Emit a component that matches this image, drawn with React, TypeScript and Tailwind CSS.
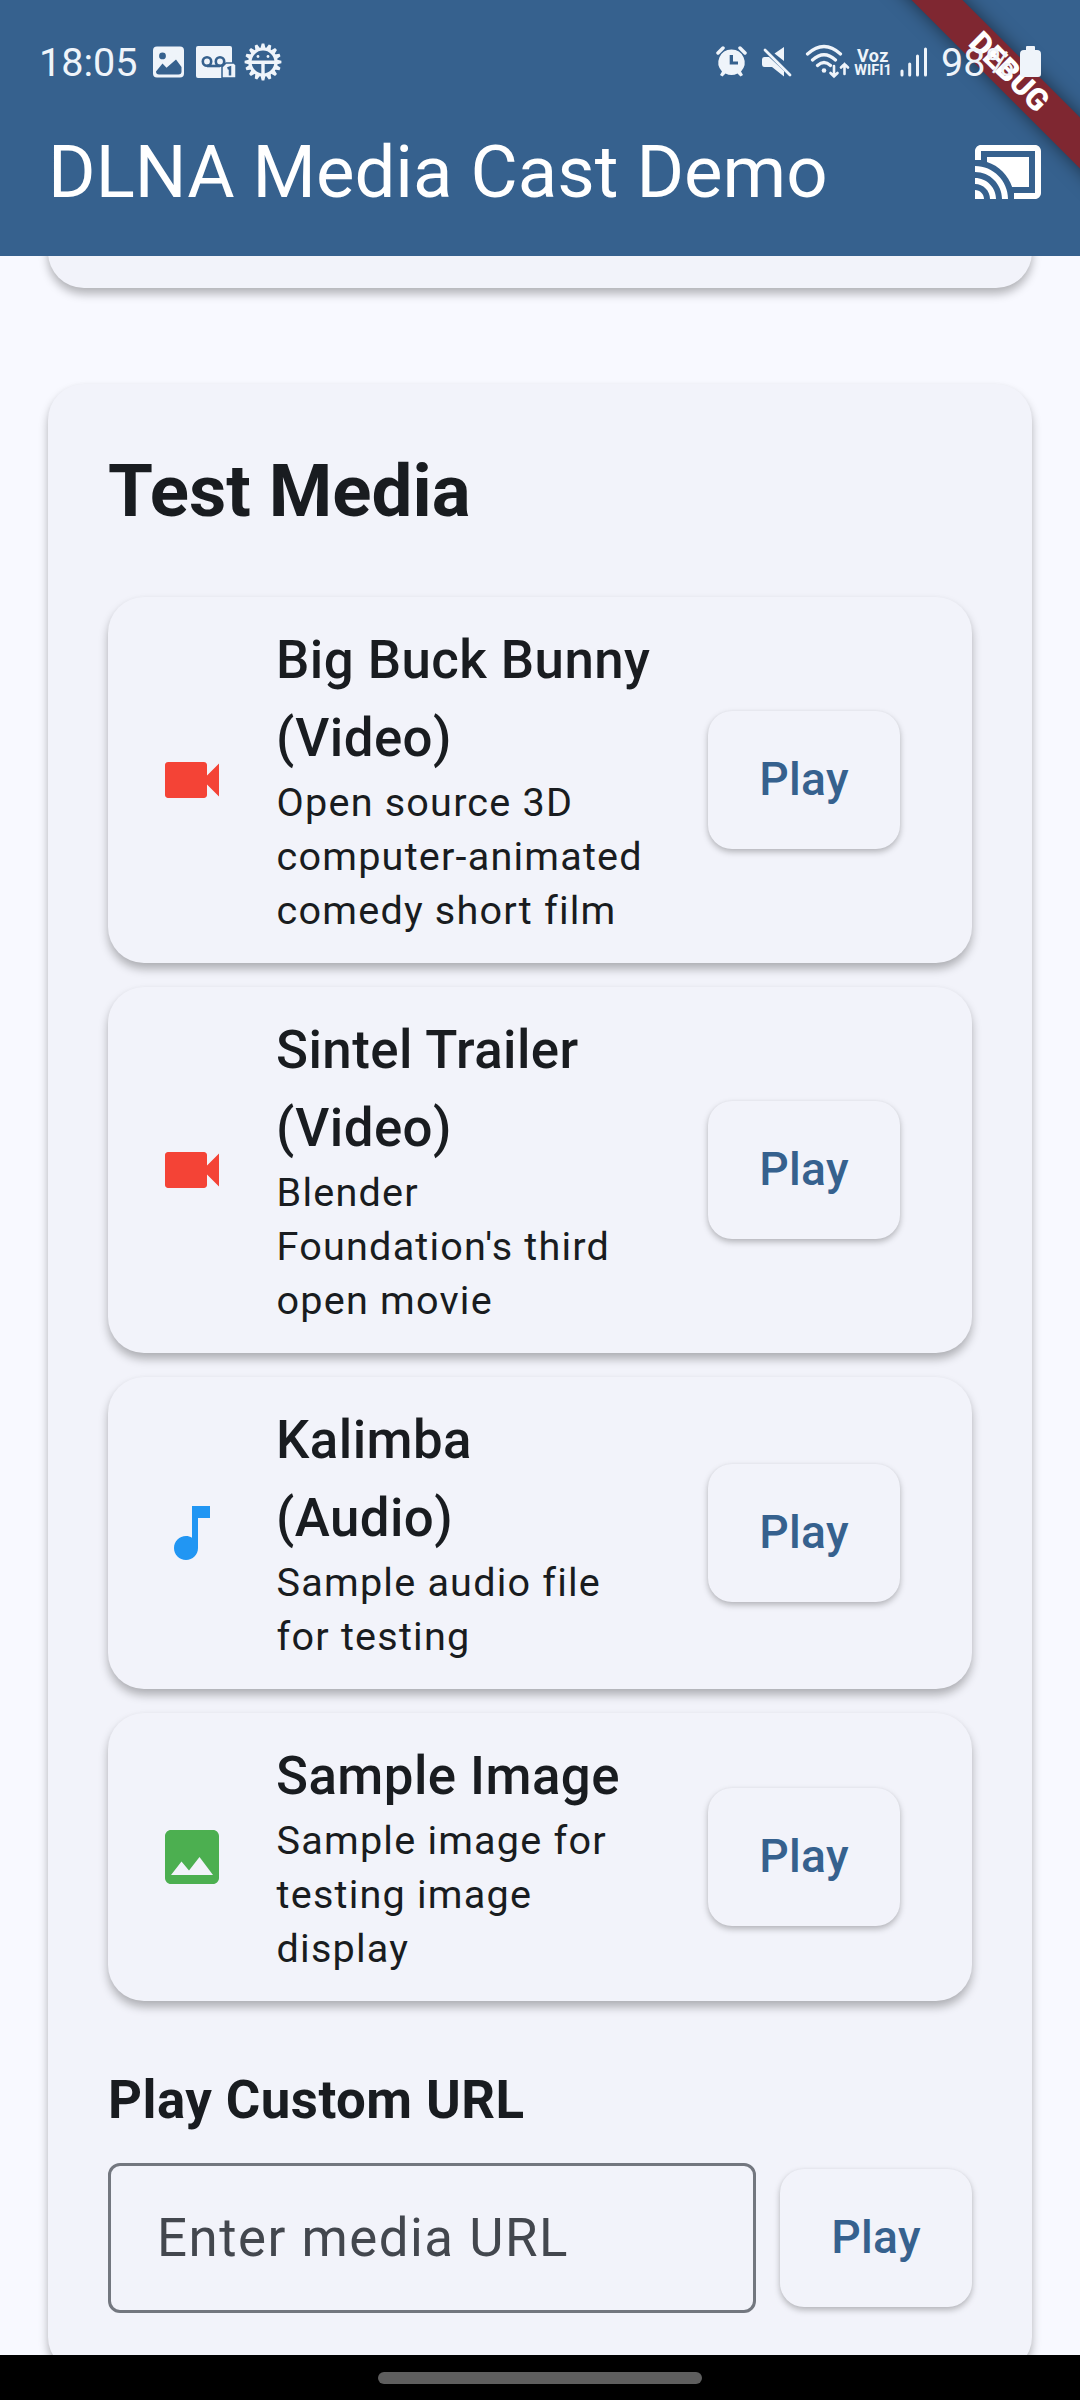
import { MdVideocam, MdMusicNote, MdImage } from "react-icons/md";
import type { ReactNode } from "react";

const ICON = "#eff4fa";

function StatusLeft() {
  const teeth = Array.from({ length: 16 }, (_, i) => i * 22.5);
  return (
    <div className="flex items-center">
      <span className="w-[99px] pt-0.5 text-[39.6px] leading-[46px] text-[#eff4fa]">18:05</span>
      <svg className="ml-[15px] h-[32px] w-[31px]" viewBox="0 0 31 32">
        <path
          fill={ICON}
          fillRule="evenodd"
          d="M4 .5h23a4 4 0 0 1 4 4v23a4 4 0 0 1-4 4H4a4 4 0 0 1-4-4v-23a4 4 0 0 1 4-4ZM9.500 6.500a3.400 3.400 0 1 0 0 6.800a3.400 3.400 0 0 0 0-6.800ZM3 25.500a3 3 0 0 0 3 3h19.500a3 3 0 0 0 3-3v-4.500l-5.500-7.500l-9.500 8.200l-4-4.200Z"
        />
      </svg>
      <svg className="ml-[12px] h-[32px] w-[40px]" viewBox="0 0 40 32">
        <path fill={ICON} d="M2 0h32a2 2 0 0 1 2 2v15h-6l-4 4v11H2a2 2 0 0 1-2-2V2a2 2 0 0 1 2-2Z" />
        <circle cx="11" cy="15.500" r="4.200" fill="none" stroke="#36618e" strokeWidth="2.600" />
        <circle cx="24" cy="15.500" r="4.200" fill="none" stroke="#36618e" strokeWidth="2.600" />
        <path d="M11 20h13" stroke="#36618e" strokeWidth="2.600" />
        <path fill={ICON} stroke="#36618e" strokeWidth="1.500" d="M30 17h8l2 2v13H26V21Z" />
        <path d="M31.500 22.500l2.500-1v8" fill="none" stroke="#36618e" strokeWidth="2.500" />
      </svg>
      <svg className="ml-[8px] h-[38px] w-[38px]" viewBox="-19 -19 38 38">
        {teeth.map((a) => (
          <path key={a} d="M-2.600-13.500L-1.300-18.400h2.600L2.600-13.500Z" fill={ICON} transform={`rotate(${a})`} />
        ))}
        <circle r="13" fill="none" stroke={ICON} strokeWidth="3.200" />
        <path d="M-12 .3h24M0 0v13" stroke={ICON} strokeWidth="3.400" />
        <circle cx="-5" cy="-5.500" r="1.400" fill={ICON} />
        <circle cx="5" cy="-5.500" r="1.400" fill={ICON} />
      </svg>
    </div>
  );
}

function StatusRight() {
  return (
    <div className="flex items-center">
      <svg className="h-[32px] w-[31px]" viewBox="0 0 31 32">
        <path
          fill={ICON}
          fillRule="evenodd"
          d="M15.500 3.500a13 13 0 0 1 9.500 22l2 3.500-2.500 1.500-3-3a13 13 0 0 1-12 0l-3 3L4 29l2-3.500a13 13 0 0 1 9.500-22ZM13.700 9v9.500H22v-3h-5V9Z"
        />
        <path d="M2 7l5-5M29 7l-5-5" stroke={ICON} strokeWidth="3.500" strokeLinecap="round" />
      </svg>
      <svg className="ml-[15px] h-[32px] w-[31px]" viewBox="0 0 31 32">
        <path fill={ICON} d="M22 1v14L12.500 7.500ZM2.500 11H7l15 14v5.500L10 21H2.500A2.500 2.500 0 0 1 0 18.500v-5A2.500 2.500 0 0 1 2.500 11Z" />
        <path d="M3 4l25 25" stroke={ICON} strokeWidth="2.800" strokeLinecap="round" />
      </svg>
      <svg className="ml-[12px] h-[36px] w-[46px]" viewBox="0 0 46 36">
        <g fill="none" stroke={ICON} strokeWidth="3.200" strokeLinecap="round">
          <path d="M2.500 10q16.500-15 33 0M7.500 16q11.500-10.500 23 0M12.500 21.500q6.500-6 13 0" />
          <path d="M29 22v10.500m-3.500-3.500l3.500 3.500 3.500-3.500M39.500 30V20m-3.500 3.500l3.500-3.500 3.500 3.500" strokeWidth="2.600" />
        </g>
        <circle cx="19" cy="26.500" r="2.300" fill={ICON} />
      </svg>
      <div className="ml-[2px] flex w-[40px] flex-col items-center pt-0.5 font-bold text-[#eff4fa]">
        <span className="text-[18px] leading-[15px] tracking-[0.5px]">Voz</span>
        <span className="text-[14.500px] leading-[15px]">WIFI1</span>
      </div>
      <svg className="ml-[7px] h-[32px] w-[28px]" viewBox="0 0 28 32">
        <path d="M2 25v4M9.700 18v11M17.500 10v19M25.500 3v26" stroke={ICON} strokeWidth="3" strokeLinecap="round" />
      </svg>
      <span className="ml-[13px] w-[79px] pt-0.5 text-[39.6px] leading-[46px] text-[#eff4fa]">98%</span>
      <svg className="h-[32px] w-[21px]" viewBox="0 0 21 32">
        <path fill={ICON} d="M7 0h7a1 1 0 0 1 1 1v3h2a4 4 0 0 1 4 4v20a3 3 0 0 1-3 3H3a3 3 0 0 1-3-3V8a4 4 0 0 1 4-4h2V1a1 1 0 0 1 1-1Z" />
      </svg>
    </div>
  );
}

function PlayButton() {
  return (
    <button className="h-[138px] w-[192px] shrink-0 rounded-3xl bg-[#f2f3fa] text-[46.2px] font-medium tracking-[0.3px] text-[#36618e] shadow-[0_3px_6px_rgba(0,0,0,0.26),0_0_3px_rgba(0,0,0,0.03)]">
      Play
    </button>
  );
}

function MediaCard({ icon, title, children }: { icon: ReactNode; title: ReactNode; children: ReactNode }) {
  return (
    <div className="flex items-center rounded-[36px] bg-[#f2f3fa] py-6 pr-[72px] pl-12 shadow-[0_6px_10px_rgba(0,0,0,0.28),0_0_4px_rgba(0,0,0,0.02)]">
      <div className="w-[120px] shrink-0">{icon}</div>
      <div className="min-w-0 flex-1 whitespace-nowrap">
        <div className="text-[52.8px] leading-[78px] font-medium tracking-[0.45px]">{title}</div>
        <div className="-mt-px mb-px pl-[0.6px] text-[39.6px] leading-[54px] tracking-[1.2px]">{children}</div>
      </div>
      <PlayButton />
    </div>
  );
}

export default function App() {
  return (
    <div className="flex h-[2400px] w-[1080px] flex-col overflow-hidden bg-[#f8f9ff] font-['Roboto',sans-serif] text-[#191c20]">
      <header className="relative z-10 h-[256px] shrink-0 bg-[#36618e]">
        <div className="flex h-[256px] items-end justify-between pr-9 pb-[37px] pl-12 text-white">
          <h1 className="text-[72.6px] leading-[93px]">DLNA Media Cast Demo</h1>
          <svg className="mb-[11px] h-[72px] w-[72px]" viewBox="0 0 24 24" fill="currentColor">
            <path d="M1 18v3h3c0-1.660-1.340-3-3-3zm0-4v2c2.760 0 5 2.240 5 5h2c0-3.870-3.130-7-7-7zm18-7H5v1.630c3.960 1.280 7.090 4.410 8.370 8.370H19V7zM1 10v2c4.970 0 9 4.030 9 9h2c0-6.080-4.930-11-11-11zm20-7H3c-1.100 0-2 .9-2 2v3h2V5h18v14h-7v2h7c1.100 0 2-.9 2-2V5c0-1.100-.9-2-2-2z" />
          </svg>
        </div>
        <div className="absolute inset-0 overflow-hidden">
          <div className="absolute top-[54px] left-[829px] flex h-[36px] w-[360px] rotate-45 items-center justify-center bg-[#7f2731] text-[30.6px] leading-none font-black text-white shadow-[0_0_18px_rgba(0,0,0,0.5)]">
            DEBUG
          </div>
        </div>
        <div className="absolute inset-x-0 top-[39px] flex h-[46px] items-center justify-between pr-[39px] pl-[39px]">
          <StatusLeft />
          <StatusRight />
        </div>
      </header>

      <main className="flex min-h-0 flex-1 flex-col gap-24 px-12">
        <section className="-mt-[100px] h-[132px] shrink-0 rounded-[36px] bg-[#f2f3fa] shadow-[0_6px_10px_rgba(0,0,0,0.28),0_0_4px_rgba(0,0,0,0.02)]" />
        <section className="h-[1989px] shrink-0 rounded-[36px] bg-[#f2f3fa] p-[60px] shadow-[0_6px_10px_rgba(0,0,0,0.28),0_0_4px_rgba(0,0,0,0.02)]">
          <h2 className="pt-px text-[72.6px] leading-[93px] font-bold">Test Media</h2>
          <div className="mt-[59px] flex flex-col gap-6">
            <MediaCard icon={<MdVideocam size={72} color="#f44336" />} title={<>Big Buck Bunny<br />(Video)</>}>
              Open source 3D<br />computer-animated<br />comedy short film
            </MediaCard>
            <MediaCard icon={<MdVideocam size={72} color="#f44336" />} title={<>Sintel Trailer<br />(Video)</>}>
              Blender<br />Foundation's third<br />open movie
            </MediaCard>
            <MediaCard icon={<MdMusicNote size={72} color="#2196f3" />} title={<>Kalimba<br />(Audio)</>}>
              Sample audio file<br />for testing
            </MediaCard>
            <MediaCard icon={<MdImage size={72} color="#4caf50" />} title="Sample Image">
              Sample image for<br />testing image<br />display
            </MediaCard>
          </div>
          <h3 className="mt-[60px] text-[52.8px] leading-[78px] font-bold tracking-[0.45px]">Play Custom URL</h3>
          <div className="mt-6 flex items-center gap-6">
            <input
              className="h-[150px] w-[648px] rounded-xl border-[3px] border-[#73777f] pl-[46px] text-[52.8px] tracking-[1.5px] placeholder:text-[#43474e]"
              placeholder="Enter media URL"
            />
            <PlayButton />
          </div>
        </section>
      </main>

      <footer className="relative z-10 flex h-[45px] shrink-0 justify-center bg-black pt-[17px]">
        <div className="h-3 w-[324px] rounded-full bg-[#5e5e5e]" />
      </footer>
    </div>
  );
}
